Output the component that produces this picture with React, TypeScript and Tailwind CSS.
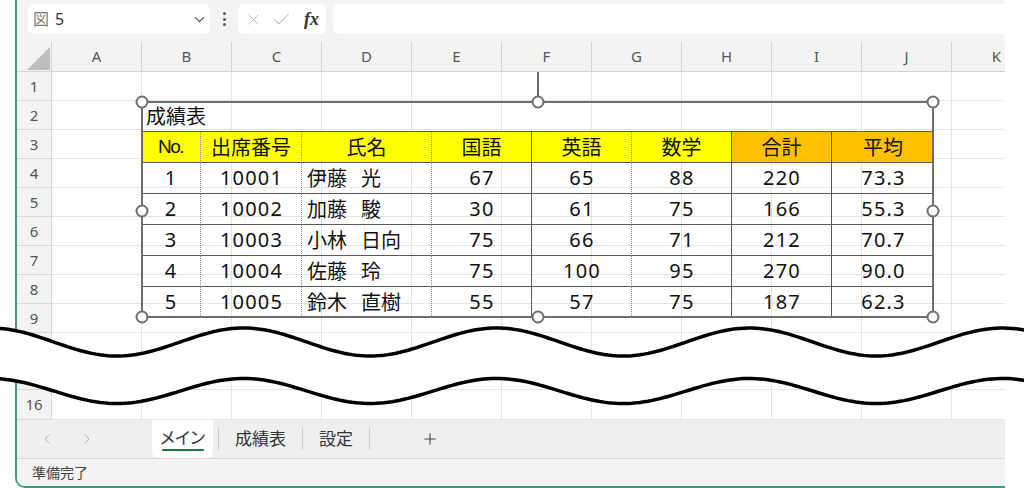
import { Check, ChevronDown, ChevronLeft, ChevronRight, Plus, X } from 'lucide-react';

const SHEET_COLS = ['A', 'B', 'C', 'D', 'E', 'F', 'G', 'H', 'I', 'J', 'K'];
const SHEET_ROWS = ['1', '2', '3', '4', '5', '6', '7', '8', '9'];

const TABLE_COLS = 'grid-cols-[60px_101px_130px_100px_100px_100px_100px_102px]';
const HEADERS = ['No.', '出席番号', '氏名', '国語', '英語', '数学', '合計', '平均'];

const V_LINES = [
  '[border-right:1px_dotted_#8c8c8c]',
  '[border-right:1px_dotted_#8c8c8c]',
  '[border-right:1px_dotted_#8c8c8c]',
  '[border-right:1px_solid_#5a5a5a]',
  '[border-right:1px_dotted_#8c8c8c]',
  '[border-right:1px_solid_#5a5a5a]',
  '[border-right:1px_solid_#5a5a5a]',
  ''
];

const SCORES = [
  { no: '1', id: '10001', sei: '伊藤', mei: '光', jp: '67', en: '65', ma: '88', sum: '220', avg: '73.3' },
  { no: '2', id: '10002', sei: '加藤', mei: '駿', jp: '30', en: '61', ma: '75', sum: '166', avg: '55.3' },
  { no: '3', id: '10003', sei: '小林', mei: '日向', jp: '75', en: '66', ma: '71', sum: '212', avg: '70.7' },
  { no: '4', id: '10004', sei: '佐藤', mei: '玲', jp: '75', en: '100', ma: '95', sum: '270', avg: '90.0' },
  { no: '5', id: '10005', sei: '鈴木', mei: '直樹', jp: '55', en: '57', ma: '75', sum: '187', avg: '62.3' }
];

const HANDLES = [
  'left-[1px] top-[1px]',
  'left-[397px] top-[1px]',
  'left-[792px] top-[1px]',
  'left-[1px] top-[110px]',
  'left-[792px] top-[110px]',
  'left-[1px] top-[216px]',
  'left-[397px] top-[216px]',
  'left-[792px] top-[216px]'
];

function wave(center: number, amp: number) {
  const pts: string[] = [];
  for (let x = -4; x <= 1028; x += 4) {
    const y = center + amp * Math.cos((2 * Math.PI * (x - 117)) / 253);
    pts.push(`${x},${y.toFixed(2)}`);
  }
  return pts;
}

function SheetRow({ label, height }: { label?: string; height: string }) {
  return (
    <div className={`flex shrink-0 ${height}`}>
      <div className="flex w-[35px] shrink-0 items-center justify-center border-r border-b border-[#d8d8d8] bg-[#f3f3f3] text-[15px] text-[#555]">
        {label}
      </div>
      {SHEET_COLS.map((c) => (
        <div key={c} className="w-[90px] shrink-0 border-r border-b border-[#e3e3e3] bg-white" />
      ))}
    </div>
  );
}

function ScoreTable() {
  const cell = 'flex h-[31px] items-center [border-bottom:1px_solid_#5a5a5a]';
  return (
    <div className="absolute left-[124px] top-[59px] h-[217px] w-[793px]">
      <div className="flex flex-col font-['Noto_Sans','Noto_Sans_CJK_JP',sans-serif] text-[20px] text-[#111]">
        <div className="flex h-[31px] items-center pl-[5px] font-['Noto_Sans_CJK_JP',sans-serif] [border-bottom:1px_solid_#5a5a5a]">
          成績表
        </div>
        <div className={`grid ${TABLE_COLS}`}>
          {HEADERS.map((h, i) => (
            <div
              key={h}
              className={`${cell} justify-center font-['Noto_Sans_CJK_JP',sans-serif] ${V_LINES[i]} ${
                i < 6 ? 'bg-[#ffff00]' : 'bg-[#ffc000]'
              }`}
            >
              {i === 0 ? <span className="font-['Liberation_Sans',sans-serif] text-[19px] tracking-[-1.5px]">{h}</span> : h}
            </div>
          ))}
          {SCORES.map((r) => {
            const values = [r.no, r.id, '', r.jp, r.en, r.ma, r.sum, r.avg];
            return values.map((v, i) =>
              i === 2 ? (
                <div key={r.no + '-name'} className={`${cell} justify-start pl-[5px] font-['Noto_Sans_CJK_JP',sans-serif] ${V_LINES[i]}`}>
                  <span>{r.sei}</span>
                  <span className="ml-[14px]">{r.mei}</span>
                </div>
              ) : (
                <div key={r.no + '-' + i} className={`${cell} justify-center pl-[1px] tracking-[1.2px] ${V_LINES[i]}`}>
                  {v}
                </div>
              )
            );
          })}
        </div>
      </div>

      <div className="pointer-events-none absolute inset-0 border-2 border-[#6e6e6e]" />
      <div className="absolute left-[396px] -top-[29px] h-[24px] w-[1.5px] bg-[#666]" />
      {HANDLES.map((pos) => (
        <div
          key={pos}
          className={`absolute ${pos} h-[13px] w-[13px] -translate-x-1/2 -translate-y-1/2 rounded-full border-2 border-[#6e6e6e] bg-white`}
        />
      ))}
    </div>
  );
}

export default function App() {
  const top = wave(342, 14);
  const bottom = wave(391, 12.5);
  const fill = [...top, ...[...bottom].reverse()].join(' ');

  return (
    <div className="relative h-[488px] w-[1024px] overflow-hidden bg-white font-['Noto_Sans','Noto_Sans_CJK_JP',sans-serif]">
      <div className="ml-[15px] flex h-[488px] w-[990px] flex-col overflow-hidden rounded-bl-[10px] border-b-2 border-l-2 border-[#3f9c74] bg-[#f3f3f3]">
        {/* formula bar */}
        <div className="flex h-[42px] shrink-0 items-start pt-[4px] pl-[11px]">
          <div className="flex h-[30px] w-[182px] items-center justify-between rounded-[6px] bg-white pr-[2px] pl-[5px] text-[16px]">
            <span>
              <span className="text-[#7a7a7a]">図</span>
              <span className="ml-[6px] text-[#333]">5</span>
            </span>
            <ChevronDown size={17} strokeWidth={1.6} className="text-[#444]" />
          </div>
          <div className="flex h-[30px] w-[28px] flex-col items-center justify-center gap-[2.5px]">
            <span className="h-[3px] w-[3px] rounded-full bg-[#555]" />
            <span className="h-[3px] w-[3px] rounded-full bg-[#555]" />
            <span className="h-[3px] w-[3px] rounded-full bg-[#555]" />
          </div>
          <div className="flex h-[30px] w-[88px] items-center gap-[8px] rounded-[6px] bg-white pl-[6px]">
            <X size={19} strokeWidth={1.2} className="text-[#bdbdbd]" />
            <Check size={21} strokeWidth={1.2} className="text-[#bdbdbd]" />
            <span className="ml-[4px] font-['Liberation_Serif',serif] text-[18px] font-bold italic text-[#333]">fx</span>
          </div>
          <div className="ml-[7px] h-[30px] flex-1 rounded-l-[6px] bg-white" />
        </div>

        {/* sheet */}
        <div className="relative flex flex-col">
          <div className="flex h-[30px] shrink-0">
            <div className="relative w-[35px] shrink-0 border-r border-b border-[#d2d2d2] bg-[#f3f3f3]">
              <div className="absolute left-[10px] top-[5px] h-[23px] w-[23px] bg-[#bdbdbd] [clip-path:polygon(100%_0,100%_100%,0_100%)]" />
            </div>
            {SHEET_COLS.map((c) => (
              <div
                key={c}
                className="flex w-[90px] shrink-0 items-center justify-center border-r border-b border-[#d2d2d2] bg-[#f3f3f3] text-[15px] text-[#555]"
              >
                {c}
              </div>
            ))}
          </div>
          {SHEET_ROWS.map((r) => (
            <SheetRow key={r} label={r} height="h-[29px]" />
          ))}
          <SheetRow height="h-[57px]" />
          <SheetRow label="16" height="h-[30px]" />

          <ScoreTable />
        </div>

        {/* sheet tabs */}
        <div className="flex h-[38px] shrink-0 items-stretch bg-[#efefef] text-[17px] text-[#333]">
          <div className="flex w-[135px] items-center gap-[24px] pl-[22px] text-[#b0b0b0]">
            <ChevronLeft size={16} strokeWidth={1.5} />
            <ChevronRight size={16} strokeWidth={1.5} />
          </div>
          <div className="relative flex w-[61px] items-center justify-center rounded-b-[6px] bg-white pb-[3px] [font-feature-settings:'palt']">
            メイン
            <span className="absolute bottom-[7px] left-[10px] h-[2.5px] w-[42px] rounded-full bg-[#217346]" />
          </div>
          <div className="ml-[5px] h-[22px] w-px self-center bg-[#c8c8c8]" />
          <div className="flex items-center px-[16px]">成績表</div>
          <div className="h-[22px] w-px self-center bg-[#c8c8c8]" />
          <div className="flex items-center px-[16px]">設定</div>
          <div className="h-[22px] w-px self-center bg-[#c8c8c8]" />
          <div className="ml-[51px] flex items-center text-[#444]">
            <Plus size={18} strokeWidth={1.5} />
          </div>
        </div>

        {/* status bar */}
        <div className="flex h-[28px] shrink-0 items-center border-t border-[#d8d8d8] bg-[#f3f3f3] pl-[15px] text-[14px] text-[#444]">
          準備完了
        </div>
      </div>

      <svg className="pointer-events-none absolute top-0 left-0" width={1024} height={488} viewBox="0 0 1024 488">
        <polygon points={fill} fill="#ffffff" />
        <polyline points={top.join(' ')} fill="none" stroke="#000" strokeWidth={3.5} strokeLinejoin="round" />
        <polyline points={bottom.join(' ')} fill="none" stroke="#000" strokeWidth={3.5} strokeLinejoin="round" />
      </svg>
    </div>
  );
}
